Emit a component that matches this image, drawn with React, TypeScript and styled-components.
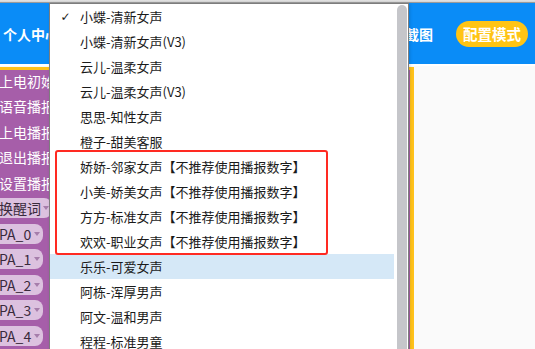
import React from "react";
import styled, { createGlobalStyle } from "styled-components";

const GlobalStyle = createGlobalStyle`
  html, body { margin: 0; padding: 0; }
  body {
    font-family: "Noto Sans CJK SC", "Noto Sans", sans-serif;
    background: #fafafa;
  }
`;

const Page = styled.div`
  position: relative;
  width: 535px;
  height: 349px;
  overflow: hidden;
  background: #fafafa;
  display: flex;
  flex-direction: column;
`;

const TopStrip = styled.div`
  height: 3px;
  flex: none;
  background: linear-gradient(#e4e4e4, #d2d2d2);
  border-bottom: 1px solid #9a9a9a;
  box-sizing: border-box;
`;

const Header = styled.div`
  height: 63px;
  flex: none;
  box-sizing: border-box;
  background: #0a8cf7;
  border-bottom: 2px solid #ffffff;
  display: flex;
  align-items: center;
  padding: 0 7px 0 3px;
`;

const Title = styled.div`
  color: #fff;
  font-weight: 700;
  font-size: 14px;
  white-space: nowrap;
`;

const NavRight = styled.div`
  margin-left: auto;
  display: flex;
  align-items: center;
  gap: 23px;
`;

const NavLink = styled.div`
  color: #fff;
  font-weight: 700;
  font-size: 14px;
  white-space: nowrap;
`;

const ModePill = styled.div`
  width: 72px;
  height: 26px;
  border-radius: 13px;
  background: #ffc414;
  color: #fff;
  font-weight: 700;
  font-size: 14.5px;
  display: flex;
  align-items: center;
  justify-content: center;
  white-space: nowrap;
`;

const Body = styled.div`
  flex: 1;
  display: flex;
  margin-top: 1px;
  min-height: 0;
`;

const SidePanel = styled.div`
  width: 414px;
  flex: none;
  box-sizing: border-box;
  background: #a65ea9;
  border-top: 3px solid #ffc21a;
  border-right: 4px solid #ffc21a;
  overflow: hidden;
  display: flex;
  flex-direction: column;
`;

const SideList = styled.div`
  margin-top: -2px;
  display: flex;
  flex-direction: column;
`;

const SideRow = styled.div`
  height: 25.5px;
  display: flex;
  align-items: center;
  flex: none;
`;

const SideLabel = styled.span`
  color: #fff;
  font-size: 14px;
  white-space: nowrap;
  margin-left: -1px;
`;

const SidePill = styled.div<{ $w: number; $pad: number }>`
  width: ${(p) => p.$w}px;
  height: 20px;
  margin-left: -10px;
  padding-left: ${(p) => p.$pad}px;
  box-sizing: border-box;
  border-radius: 8px;
  background: #dcc1df;
  color: #3a2a3c;
  font-size: 14px;
  display: flex;
  align-items: center;
  white-space: nowrap;
  position: relative;
`;

const Caret = styled.svg`
  position: absolute;
  right: 3px;
  top: 50%;
  margin-top: -2px;
  width: 6px;
  height: 4px;
`;

const Content = styled.div`
  flex: 1;
  background: #fafafa;
`;

const Menu = styled.div`
  position: absolute;
  left: 49px;
  top: 3px;
  width: 360px;
  height: 360px;
  box-sizing: border-box;
  border: 1px solid #7d7d7d;
  background: #fff;
  display: flex;
  box-shadow: 1px 1px 3px rgba(0, 0, 0, 0.15);
`;

const MenuList = styled.div`
  width: 344px;
  flex: none;
  display: flex;
  flex-direction: column;
`;

const MenuItem = styled.div<{ $hover?: boolean }>`
  height: 25px;
  flex: none;
  display: flex;
  align-items: center;
  background: ${(p) => (p.$hover ? "#d5e8f7" : "transparent")};
  color: #1a1a1a;
  font-size: 13px;
  white-space: nowrap;
`;

const CheckSlot = styled.span`
  width: 30px;
  flex: none;
  text-align: center;
  font-family: "DejaVu Sans", sans-serif;
  font-size: 12px;
  padding-left: 1px;
  box-sizing: border-box;
`;

const ScrollThumb = styled.div`
  margin-left: 3px;
  margin-top: 1px;
  width: 10px;
  height: 400px;
  flex: none;
  border-radius: 5px;
  background: #c5c6ca;
`;

const Annotation = styled.div`
  position: absolute;
  left: 55px;
  top: 150px;
  width: 273px;
  height: 105px;
  box-sizing: border-box;
  border: 2.5px solid #ff2a22;
  border-radius: 3px;
  pointer-events: none;
`;

const sideItems: { label: string; pill?: [number, number] }[] = [
  { label: "上电初始化" },
  { label: "语音播报设置" },
  { label: "上电播报" },
  { label: "退出播报" },
  { label: "设置播报" },
  { label: "换醒词", pill: [62, 9] },
  { label: "PA_0", pill: [53, 9] },
  { label: "PA_1", pill: [53, 9] },
  { label: "PA_2", pill: [53, 9] },
  { label: "PA_3", pill: [53, 9] },
  { label: "PA_4", pill: [53, 9] },
];

const voices = [
  "小蝶-清新女声",
  "小蝶-清新女声(V3)",
  "云儿-温柔女声",
  "云儿-温柔女声(V3)",
  "思思-知性女声",
  "橙子-甜美客服",
  "娇娇-邻家女声【不推荐使用播报数字】",
  "小美-娇美女声【不推荐使用播报数字】",
  "方方-标准女声【不推荐使用播报数字】",
  "欢欢-职业女声【不推荐使用播报数字】",
  "乐乐-可爱女声",
  "阿栋-浑厚男声",
  "阿文-温和男声",
  "程程-标准男童",
];

export default function App() {
  return (
    <>
      <GlobalStyle />
      <Page>
        <TopStrip />
        <Header>
          <Title>个人中心</Title>
          <NavRight>
            <NavLink>截图</NavLink>
            <ModePill>配置模式</ModePill>
          </NavRight>
        </Header>
        <Body>
          <SidePanel>
            <SideList>
              {sideItems.map((it) => (
                <SideRow key={it.label}>
                  {it.pill ? (
                    <SidePill $w={it.pill[0]} $pad={it.pill[1]}>
                      {it.label}
                      <Caret viewBox="0 0 6 4">
                        <path d="M0 0 L6 0 L3 4 Z" fill="#a67dab" />
                      </Caret>
                    </SidePill>
                  ) : (
                    <SideLabel>{it.label}</SideLabel>
                  )}
                </SideRow>
              ))}
            </SideList>
          </SidePanel>
          <Content />
        </Body>
        <Menu>
          <MenuList>
            {voices.map((v, i) => (
              <MenuItem key={v} $hover={i === 10}>
                <CheckSlot>{i === 0 ? "✓" : ""}</CheckSlot>
                {v}
              </MenuItem>
            ))}
          </MenuList>
          <ScrollThumb />
        </Menu>
        <Annotation />
      </Page>
    </>
  );
}
